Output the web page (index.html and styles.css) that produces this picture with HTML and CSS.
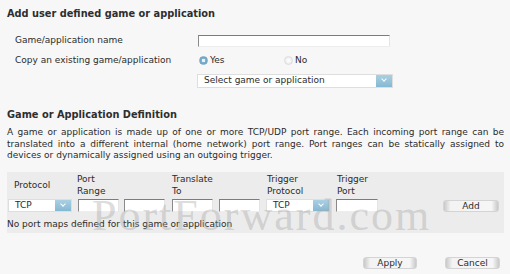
FILE: index.html
```html
<!DOCTYPE html>
<html>
<head>
<meta charset="utf-8">
<link rel="stylesheet" href="styles.css">
</head>
<body>
<div class="page">
  <h1 class="title">Add user defined game or application</h1>
  <div class="form">
    <div class="label">Game/application name</div>
    <div class="field"><span class="input input-name"></span></div>
    <div class="label">Copy an existing game/application</div>
    <div class="field radios">
      <span class="radio-opt yes-opt"><span class="radio on"></span>Yes</span>
      <span class="radio-opt"><span class="radio"></span>No</span>
    </div>
    <div class="label"></div>
    <div class="field"><span class="select select-game"><span class="sel-text">Select game or application</span><span class="arrow"></span></span></div>
  </div>

  <h1 class="title title2">Game or Application Definition</h1>
  <p class="desc">A game or application is made up of one or more TCP/UDP port range. Each incoming port range can be translated into a different internal (home network) port range. Port ranges can be statically assigned to devices or dynamically assigned using an outgoing trigger.</p>

  <div class="table">
    <div class="grid">
      <div class="th th-proto">Protocol</div>
      <div class="th th-range">Port<br>Range</div>
      <div class="th th-trans">Translate<br>To</div>
      <div class="th th-tproto">Trigger<br>Protocol</div>
      <div class="th th-tport">Trigger<br>Port</div>

      <div class="cell"><span class="select select-proto"><span class="sel-text">TCP</span><span class="arrow"></span></span></div>
      <div class="cell"><span class="input input-port"></span></div>
      <div class="cell"><span class="input input-port"></span></div>
      <div class="cell"><span class="input input-port"></span></div>
      <div class="cell"><span class="input input-port"></span></div>
      <div class="cell"><span class="select select-tproto"><span class="sel-text">TCP</span><span class="arrow"></span></span></div>
      <div class="cell"><span class="input input-tport"></span></div>
      <div class="cell"><span class="btn btn-add">Add</span></div>
    </div>
    <div class="empty">No port maps defined for this game or application</div>
  </div>

  <div class="footer">
    <span class="btn btn-apply">Apply</span>
    <span class="btn btn-cancel">Cancel</span>
  </div>
</div>
<div class="watermark">PortForward.com</div>
</body>
</html>
```

FILE: styles.css
```css
html, body {
  margin: 0;
  padding: 0;
  background: #f7f7f7;
}
body {
  width: 510px;
  height: 274px;
  overflow: hidden;
  position: relative;
  font-family: "DejaVu Sans", Verdana, sans-serif;
  font-size: 9px;
  color: #2b2b2b;
}
.page {
  padding: 8px 6px 0 7px;
}
.title {
  margin: 0;
  font-size: 9.8px;
  line-height: 12px;
  font-weight: bold;
  color: #2e2e2e;
}
.form {
  display: grid;
  grid-template-columns: 183px 1fr;
  grid-auto-rows: 13px;
  row-gap: 7px;
  margin-top: 14px;
  padding-left: 8px;
}
.label {
  line-height: 13px;
}
.field {
  display: flex;
  align-items: center;
}
.input {
  display: inline-block;
  box-sizing: border-box;
  height: 12px;
  background: #fff;
  border: 1px solid;
  border-color: #7c7c7c #e4e4e4 #eeeeee #8a8a8a;
}
.input-name {
  width: 192px;
}
.radio-opt {
  display: inline-flex;
  align-items: center;
  line-height: 13px;
}
.yes-opt {
  width: 85px;
  margin-left: 1px;
}
.radio {
  display: inline-block;
  box-sizing: border-box;
  width: 9px;
  height: 9px;
  border-radius: 50%;
  margin-right: 2px;
  border: 1px solid #dcdcdc;
  background: radial-gradient(circle at 50% 50%, #ffffff 0, #f0f0f0 60%, #e2e2e2 100%);
}
.radio.on {
  border-color: #7ea9c3;
  background: radial-gradient(circle at 50% 50%, #e8f3f9 0, #e8f3f9 28%, #7fb1d0 40%, #5f97ba 100%);
}
.select {
  display: inline-flex;
  box-sizing: border-box;
  height: 13px;
  background: #fff;
  border: 1px solid #dedede;
  align-items: center;
}
.sel-text {
  flex: 1;
  padding-left: 6px;
  line-height: 11px;
}
.arrow {
  display: inline-block;
  width: 16px;
  height: 11px;
  background: linear-gradient(#a9d0e3, #86b8d2);
  position: relative;
}
.arrow::after {
  content: "";
  position: absolute;
  left: 6px;
  top: 2px;
  width: 3px;
  height: 3px;
  border-right: 1px solid #fff;
  border-bottom: 1px solid #fff;
  transform: rotate(45deg);
}
.select-game {
  width: 196px;
  margin-left: -1px;
  height: 14px;
}
.select-game .arrow {
  height: 12px;
}
.title2 {
  margin-top: 22px;
}
.desc {
  margin: 6px 0 0;
  line-height: 11.6px;
  text-align: justify;
}
.table {
  margin-top: 10px;
  background: #ececec;
  height: 61px;
  box-sizing: border-box;
  padding-top: 1px;
}
.grid {
  display: grid;
  grid-template-columns: 70px 46px 48px 47px 47px 70px 107px 1fr;
  grid-template-rows: 24px 14px;
  padding-left: 1px;
  row-gap: 2px;
}
.th {
  grid-row: 1;
  line-height: 12px;
}
.th-proto {
  grid-column: 1;
  align-self: center;
  padding-left: 6px;
}
.th-range {
  grid-column: 2 / span 2;
  margin-left: -1px;
}
.th-trans {
  grid-column: 4 / span 2;
}
.th-tproto {
  grid-column: 6;
  padding-left: 1px;
}
.th-tport {
  grid-column: 7;
  padding-left: 1px;
}
.cell {
  grid-row: 2;
  display: flex;
  align-items: center;
}
.input-port {
  width: 41px;
  height: 13px;
}
.input-tport {
  width: 42px;
  height: 13px;
}
.select-proto,
.select-tproto {
  width: 64px;
}
.btn {
  display: inline-flex;
  box-sizing: border-box;
  justify-content: center;
  align-items: center;
  height: 12px;
  border: 1px solid #d4d4d4;
  border-radius: 3px;
  background: linear-gradient(to right, #c9c9c9 0, #f3f3f3 12%, #f6f6f6 88%, #c9c9c9 100%);
  color: #2b2b2b;
  line-height: 10px;
}
.btn-add {
  width: 56px;
}
.empty {
  line-height: 12px;
  margin-top: 5px;
}
.footer {
  display: flex;
  justify-content: flex-end;
  gap: 28px;
  margin-top: 24px;
  padding-right: 4px;
}
.btn-apply {
  width: 54px;
}
.btn-cancel {
  width: 55px;
}
.watermark {
  position: absolute;
  left: 92px;
  top: 191px;
  font-family: "Liberation Serif", "Times New Roman", serif;
  font-size: 44px;
  line-height: 50px;
  letter-spacing: 2px;
  color: rgba(165, 165, 165, 0.4);
  white-space: nowrap;
  pointer-events: none;
}
```
